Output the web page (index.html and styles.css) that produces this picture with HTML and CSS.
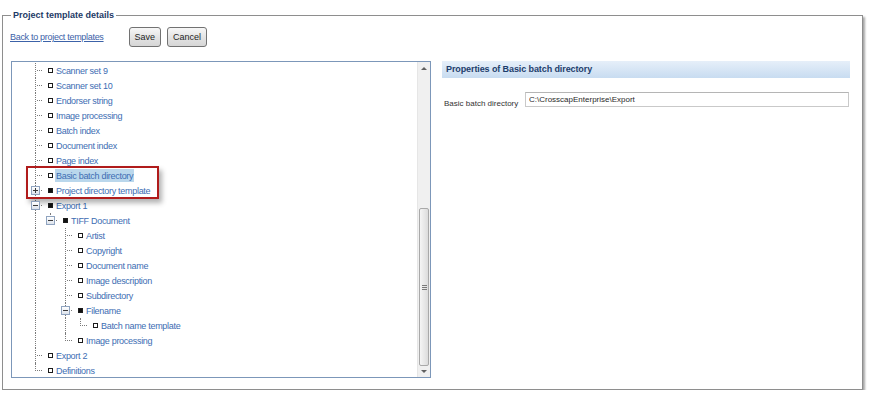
FILE: index.html
```html
<!DOCTYPE html>
<html>
<head>
<meta charset="UTF-8">
<title>Project template details</title>
<link rel="stylesheet" href="styles.css">
</head>
<body>
<fieldset class="FRAME">
    <legend>Project template details</legend>
    <div class="TOOLBAR">
        <a class="BACK" href="#">Back to project templates</a>
        <button class="BTN" type="button">Save</button>
        <button class="BTN" type="button">Cancel</button>
    </div>
    <div class="WORK">
        <div class="TREE_PANEL">
            <div class="TREE">
                <div class="NODE"><span class="G T"></span><span class="SQ"></span><span class="LBL">Scanner set 9</span></div>
                <div class="NODE"><span class="G T"></span><span class="SQ"></span><span class="LBL">Scanner set 10</span></div>
                <div class="NODE"><span class="G T"></span><span class="SQ"></span><span class="LBL">Endorser string</span></div>
                <div class="NODE"><span class="G T"></span><span class="SQ"></span><span class="LBL">Image processing</span></div>
                <div class="NODE"><span class="G T"></span><span class="SQ"></span><span class="LBL">Batch index</span></div>
                <div class="NODE"><span class="G T"></span><span class="SQ"></span><span class="LBL">Document index</span></div>
                <div class="NODE"><span class="G T"></span><span class="SQ"></span><span class="LBL">Page index</span></div>
                <div class="NODE"><span class="G T"></span><span class="SQ"></span><span class="LBL SELECTED">Basic batch directory</span></div>
                <div class="NODE"><span class="G T"><i class="EXP PLUS"></i></span><span class="SQ FULL"></span><span class="LBL">Project directory template</span></div>
                <div class="NODE"><span class="G T"><i class="EXP"></i></span><span class="SQ FULL"></span><span class="LBL">Export 1</span></div>
                <div class="NODE"><span class="G V"></span><span class="G L"><i class="EXP"></i></span><span class="SQ FULL"></span><span class="LBL">TIFF Document</span></div>
                <div class="NODE"><span class="G V"></span><span class="G"></span><span class="G T"></span><span class="SQ"></span><span class="LBL">Artist</span></div>
                <div class="NODE"><span class="G V"></span><span class="G"></span><span class="G T"></span><span class="SQ"></span><span class="LBL">Copyright</span></div>
                <div class="NODE"><span class="G V"></span><span class="G"></span><span class="G T"></span><span class="SQ"></span><span class="LBL">Document name</span></div>
                <div class="NODE"><span class="G V"></span><span class="G"></span><span class="G T"></span><span class="SQ"></span><span class="LBL">Image description</span></div>
                <div class="NODE"><span class="G V"></span><span class="G"></span><span class="G T"></span><span class="SQ"></span><span class="LBL">Subdirectory</span></div>
                <div class="NODE"><span class="G V"></span><span class="G"></span><span class="G T"><i class="EXP"></i></span><span class="SQ FULL"></span><span class="LBL">Filename</span></div>
                <div class="NODE"><span class="G V"></span><span class="G"></span><span class="G V"></span><span class="G L"></span><span class="SQ"></span><span class="LBL">Batch name template</span></div>
                <div class="NODE"><span class="G V"></span><span class="G"></span><span class="G L"></span><span class="SQ"></span><span class="LBL">Image processing</span></div>
                <div class="NODE"><span class="G T"></span><span class="SQ"></span><span class="LBL">Export 2</span></div>
                <div class="NODE"><span class="G L"></span><span class="SQ"></span><span class="LBL">Definitions</span></div>
            </div>
            <div class="SBAR">
                <div class="ARR UP"></div>
                <div class="TRACK"></div>
                <div class="THUMB"><span class="GRIP"></span></div>
                <div class="ARR DOWN"></div>
            </div>
            <div class="MARK"></div>
        </div>
        <div class="PROPS">
            <div class="PROPS_HEAD">Properties of Basic batch directory</div>
            <div class="FIELD">
                <label class="FIELD_LBL" for="batch_dir">Basic batch directory</label>
                <input class="FIELD_INPUT" id="batch_dir" type="text" value="C:\CrosscapEnterprise\Export">
            </div>
        </div>
    </div>
</fieldset>
</body>
</html>
```

FILE: styles.css
```css
body {
    margin: 0;
    background: #fff;
    font-family: "Liberation Sans", Arial, sans-serif;
}
fieldset.FRAME {
    width: 861px;
    min-width: 0;
    box-sizing: border-box;
    margin: 8px 0 0 2px;
    padding: 0 12px 11px 8px;
    border: 1px solid #8e8e8e;
    box-shadow: 2px 2px 2px rgba(0, 0, 0, 0.35);
}
legend {
    padding: 0 2px;
    font-size: 9px;
    font-weight: bold;
    line-height: 14px;
    color: #1d3a66;
}
.TOOLBAR {
    display: flex;
    align-items: center;
    height: 20px;
    padding-top: 5px;
}
a.BACK {
    margin-left: -1px;
    margin-right: 25px;
    font-size: 9px;
    letter-spacing: -0.3px;
    color: #3c62a8;
    text-decoration: underline;
}
.BTN {
    height: 20px;
    padding: 0 5px;
    margin: 0 6px 0 0;
    border: 1px solid #727272;
    border-radius: 3px;
    background: linear-gradient(#f7f7f7, #e4e4e4 50%, #d6d6d6);
    font-family: "Liberation Sans", Arial, sans-serif;
    font-size: 9px;
    color: #1e1e1e;
}
.WORK {
    display: flex;
    gap: 11px;
    margin-top: 14px;
}
.TREE_PANEL {
    position: relative;
    display: flex;
    width: 420px;
    height: 317px;
    box-sizing: border-box;
    border: 1px solid #7c97b9;
    flex: none;
}
.TREE {
    flex: 1;
    overflow: hidden;
    padding-top: 1px;
}
.NODE {
    display: flex;
    align-items: center;
    height: 15px;
    padding-left: 16px;
}
.G {
    position: relative;
    width: 15px;
    height: 15px;
    flex: none;
}
.V::before, .T::before, .L::before {
    content: "";
    position: absolute;
    left: 7px;
    top: 0;
    height: 15px;
    border-left: 1px dotted #7a7a7a;
}
.L::before {
    height: 8px;
}
.T::after, .L::after {
    content: "";
    position: absolute;
    left: 9px;
    top: 7px;
    width: 5px;
    border-top: 1px dotted #7a7a7a;
}
.EXP {
    position: absolute;
    left: 3px;
    top: 3px;
    width: 7px;
    height: 7px;
    border: 1px solid #8fa3bf;
    background: linear-gradient(#ffffff, #dde3ec);
    z-index: 1;
}
.EXP::before {
    content: "";
    position: absolute;
    left: 1px;
    top: 3px;
    width: 5px;
    height: 1px;
    background: #3a3a3a;
}
.EXP.PLUS::after {
    content: "";
    position: absolute;
    left: 3px;
    top: 1px;
    width: 1px;
    height: 5px;
    background: #3a3a3a;
}
.SQ {
    width: 3px;
    height: 3px;
    margin-left: 5px;
    border: 1px solid #1c1c1c;
    background: #fff;
    flex: none;
}
.SQ.FULL {
    background: #111;
}
.LBL {
    margin-left: 2px;
    padding: 1px 1px 0;
    font-size: 9px;
    line-height: 12px;
    letter-spacing: -0.3px;
    color: #3d6db3;
    white-space: nowrap;
}
.LBL.SELECTED {
    background: #bad7ec;
}
.SBAR {
    display: flex;
    flex-direction: column;
    width: 12px;
    flex: none;
    border-left: 1px solid #e6e6e6;
    background: #f0f0f0;
}
.ARR {
    position: relative;
    flex: none;
    height: 17px;
}
.ARR::before {
    content: "";
    position: absolute;
    left: 3px;
    border-left: 3px solid transparent;
    border-right: 3px solid transparent;
}
.UP::before {
    top: 5px;
    border-bottom: 3px solid #606060;
}
.DOWN {
    flex: 1;
}
.DOWN::before {
    top: 4px;
    border-top: 3px solid #606060;
}
.TRACK {
    height: 129px;
    flex: none;
}
.THUMB {
    display: flex;
    align-items: center;
    justify-content: center;
    height: 158px;
    flex: none;
    box-sizing: border-box;
    margin: 0 1px;
    border: 1px solid #a9a9a9;
    border-radius: 2px;
    background: linear-gradient(to right, #f5f5f5, #dcdcdc);
}
.GRIP {
    width: 5px;
    height: 5px;
    background: repeating-linear-gradient(#7a7a7a 0 1px, transparent 1px 2px);
}
.MARK {
    position: absolute;
    left: 14px;
    top: 104px;
    width: 133px;
    height: 33px;
    box-sizing: border-box;
    border: 2px solid #b01b1b;
    box-shadow: 3px 4px 5px rgba(0, 0, 0, 0.3);
}
.PROPS {
    width: 408px;
    flex: none;
}
.PROPS_HEAD {
    height: 17px;
    padding-left: 4px;
    line-height: 17px;
    font-size: 9px;
    font-weight: bold;
    letter-spacing: -0.1px;
    color: #1d3d6c;
    background: linear-gradient(#e6eff9, #c8dcf1);
}
.FIELD {
    display: flex;
    align-items: flex-start;
    margin-top: 14px;
    padding-left: 2px;
}
.FIELD_LBL {
    width: 81px;
    flex: none;
    padding-top: 6px;
    font-size: 8px;
    line-height: 12px;
    color: #333;
}
.FIELD_INPUT {
    width: 324px;
    height: 15px;
    box-sizing: border-box;
    margin: 0;
    padding: 0 3px;
    border: 1px solid #c9c9c9;
    border-top-color: #b5b5b5;
    font-family: "Liberation Sans", Arial, sans-serif;
    font-size: 8px;
    color: #2a2a2a;
}
```
